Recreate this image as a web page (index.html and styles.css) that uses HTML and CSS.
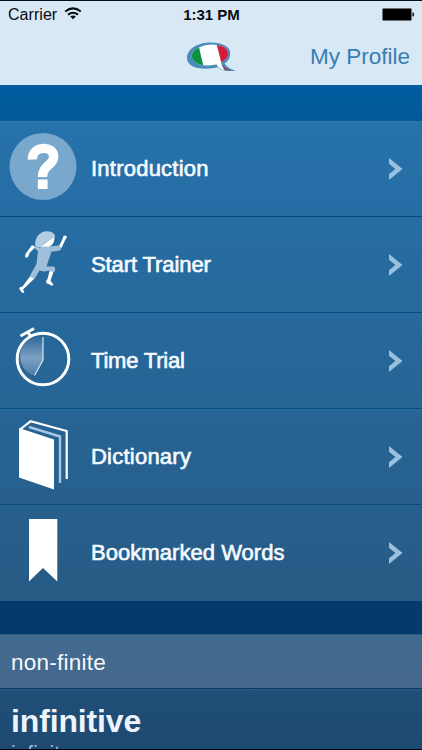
FILE: index.html
```html
<!DOCTYPE html>
<html lang="en">
<head>
<meta charset="utf-8">
<title>My Profile</title>
<link rel="stylesheet" href="styles.css">
</head>
<body>
<div class="screen">
  <header class="header">
    <div class="status">
      <div class="carrier">Carrier
        <svg class="wifi" width="18" height="13" viewBox="0 0 18 13"><g fill="none" stroke="#080b0e" stroke-width="2"><path d="M1.2 4.5Q9-1.7 16.8 4.5"/><path d="M4 7.6Q9 3.8 14 7.6"/></g><path fill="#080b0e" d="M6.2 9.5Q9 7.4 11.8 9.5L9 12.3Z"/></svg>
      </div>
      <div class="time">1:31 PM</div>
      <svg class="battery" width="33" height="14" viewBox="0 0 33 14"><rect x=".5" y=".5" width="29" height="12" rx="1" fill="#000" stroke="#697178" stroke-width=".7"/><path d="M30.5 4.5h1q1 2 0 4h-1z"/></svg>
    </div>
    <nav class="nav">
      <svg class="logo" width="50" height="32" viewBox="0 0 50 32">
        <defs><clipPath id="bubble"><ellipse cx="24" cy="14" rx="18.3" ry="10.4" transform="rotate(-6 24 14)"/></clipPath></defs>
        <path fill="#498cb9" d="M1 17C1 7.500 12 1.500 25 1.500C36.500 1.500 44.200 5.500 44.200 12.500C44.200 17 42 20.500 38.500 22.500Q42 28 49.500 29.600Q38 31.500 31.500 26.300C15 30 1 26.500 1 17Z"/>
        <g clip-path="url(#bubble)"><path fill="#fff" d="M0 0h50v32H0z"/><path fill="#0b9143" d="M0 0H11.500L19 32H0z"/><path fill="#d21c38" d="M29.800 0H50V32H38Z"/></g>
        <path fill="#fff" d="M28.500 21h6.500q.5 4.500 3.500 8q-5.500-1-8-5.500z"/><path fill="#a9345a" d="M36.500 23.500Q39 28 44.500 29.500L39 29.300Q36.500 26.500 36.500 23.500z"/>
      </svg>
      <a class="profile">My Profile</a>
    </nav>
  </header>
  <main class="menu">
    <div class="row">
      <svg class="icon" width="86" height="94" viewBox="0 0 86 94"><circle cx="43" cy="44.500" r="33.500" fill="#79a8cc"/><path fill="none" stroke="#fff" stroke-width="9.400" d="M32.400 37.500C32 23.500 53.700 23 53.700 34.500C53.700 43.500 42.500 43 42.500 55"/><path fill="#fff" d="M37.800 57.500h9.800v9.500h-9.800z"/></svg>
      <span class="label">Introduction</span><svg class="arrow" width="16" height="24" viewBox="0 0 16 24"><path d="M1 1L14.5 12L1 23V17.3L7.4 12L1 6.7Z"/></svg>
    </div>
    <div class="row">
      <svg class="icon" width="86" height="94" viewBox="0 0 86 94">
        <path fill="#fff" d="M40 29L54.5 18Q55 26 49 29Z"/>
        <path fill="#fff" d="M35.5 29L32 27L25.5 36L25 39Q27 41 28.5 38L29.5 35Z"/>
        <path fill="#fff" d="M58.8 28.5L62.5 21L63.5 18Q66 16.5 67 19L65.2 22L61.5 30Z"/>
        <path fill="#fff" d="M30 58.5L34.5 60.5L23 71.5L24.3 74Q23 76 21.5 74L19.3 71Q19.3 68.5 22.5 68.5Z"/>
        <path fill="#fff" d="M50 51L54.5 51L50.5 62.5L53.3 66.5Q53 68.5 50.5 67L46.3 65Q45.5 63 47.5 61Z"/>
        <path fill="#9fbfdb" d="M35 27.5Q38 31 43 28.5L49 28.5L59 27.5L61.5 31.5Q57 34 51.5 33.5L46.5 48.5H54Q56 50 54.5 54L50 53.5V52.5L44 53.5L39.5 52.5L34.5 61L29.5 58.5L36.5 46L38 33L34.5 30Z"/>
        <path fill="#b5cde4" d="M35 27C35 18 41 13.5 46 13.2Q53 13 55 17.5Q54.5 20 50 22Q45 24 42.5 28Q38 31 35 27Z"/>
      </svg>
      <span class="label tight">Start Trainer</span><svg class="arrow" width="16" height="24" viewBox="0 0 16 24"><path d="M1 1L14.5 12L1 23V17.3L7.4 12L1 6.7Z"/></svg>
    </div>
    <div class="row">
      <svg class="icon" width="86" height="94" viewBox="0 0 86 94"><defs><linearGradient id="dial" x2="0" y2="1"><stop stop-color="#2c6799"/><stop offset=".55" stop-color="#7da2c3"/><stop offset="1" stop-color="#4a7da9"/></linearGradient></defs><path fill="url(#dial)" d="M43 22C14 23 14 56 34.500 61.500L43 46Z"/><circle cx="43" cy="45" r="25.8" fill="none" stroke="#fff" stroke-width="3"/><path d="M43 23V46L34.5 61.5" fill="none" stroke="#d5e4f0" stroke-width="1.2"/><path d="M20.5 22L34 14.5M27.5 18L31 22.5" fill="none" stroke="#fff" stroke-width="3"/></svg>
      <span class="label tighter">Time Trial</span><svg class="arrow" width="16" height="24" viewBox="0 0 16 24"><path d="M1 1L14.5 12L1 23V17.3L7.4 12L1 6.7Z"/></svg>
    </div>
    <div class="row">
      <svg class="icon" width="86" height="94" viewBox="0 0 86 94"><path fill="#fff" d="M19 18L54 29.5V79.5L19 67.5Z"/><path fill="none" stroke="#fff" stroke-width="2.2" d="M20 19.5L30.5 11.3L66.7 21V69"/><path fill="none" stroke="#a7c6e2" stroke-width="2.4" d="M29 17L60 26.5V73"/></svg>
      <span class="label">Dictionary</span><svg class="arrow" width="16" height="24" viewBox="0 0 16 24"><path d="M1 1L14.5 12L1 23V17.3L7.4 12L1 6.7Z"/></svg>
    </div>
    <div class="row">
      <svg class="icon" width="86" height="94" viewBox="0 0 86 94"><path fill="#fff" d="M29 13H57.3V75.5L43 62L29 75.5Z"/></svg>
      <span class="label snug">Bookmarked Words</span><svg class="arrow" width="16" height="24" viewBox="0 0 16 24"><path d="M1 1L14.5 12L1 23V17.3L7.4 12L1 6.7Z"/></svg>
    </div>
  </main>
  <section class="word">
    <h2 class="category">non-finite</h2>
    <div class="entry"><h1 class="term">infinitive</h1><p class="translation">infinito</p></div>
  </section>
</div>
</body>
</html>
```
FILE: styles.css
```css
* { box-sizing: border-box; }
body { margin: 0; font-family: "Liberation Sans", Arial, sans-serif; }
h1, h2, p { margin: 0; }
svg { display: block; flex: none; }
.screen {
  display: flex;
  flex-direction: column;
  height: 750px;
  overflow: hidden;
  background: linear-gradient(#005c9f 85px, #005999 120px, #033b6c 600px, #033b6c);
  border-top: 1px solid #080b18;
  border-bottom: 1px solid #02050c;
}
.header { flex: none; height: 84px; background: #d9e8f5; }
.status {
  display: grid;
  grid-template-columns: 1fr auto 1fr;
  align-items: center;
  height: 27px;
  padding: 0 7px 0 8px;
  color: #080b0e;
}
.carrier { display: flex; align-items: center; gap: 7px; font-size: 16px; letter-spacing: .05px; }
.wifi { margin-top: -3px; }
.time { font-size: 15px; font-weight: 700; }
.battery { justify-self: end; }
.nav {
  display: flex;
  align-items: center;
  justify-content: space-between;
  height: 57px;
  padding: 0 12px 0 186px;
}
.profile { font-size: 22.5px; white-space: nowrap; color: #397db3; }
.menu {
  flex: none;
  height: 480px;
  margin-top: 36px;
  background: linear-gradient(#2672ab, #275b85);
}
.row {
  display: flex;
  align-items: center;
  height: 96px;
  padding-right: 18px;
  border-top: 1px solid #347aad;
  border-bottom: 1px solid #094a7c;
}
.row + .row { border-top-color: #286ea4; }
.row:last-child { border-top-color: #2a6290; border-bottom-color: transparent; }
.icon { margin-right: 5px; }
.label {
  flex: 1;
  font-size: 22px;
  letter-spacing: .23px;
  color: #f4faff;
  -webkit-text-stroke: .65px #f4faff;
}
.snug { letter-spacing: .05px; }
.tight { letter-spacing: -.1px; }
.tighter { letter-spacing: -.2px; }
.arrow { fill: #9bc0de; }
.word { flex: none; margin-top: 33px; }
.category {
  height: 55px;
  padding-left: 11px;
  border-top: 1px solid #2d5e88;
  border-bottom: 1px solid #0b3762;
  background: linear-gradient(#426b8f, #45678c);
  font-size: 22.5px;
  font-weight: 400;
  line-height: 55px;
  letter-spacing: .25px;
  color: #f4f8fc;
}
.entry {
  height: 100px;
  padding: 11px 11px 0;
  border-top: 1px solid #2a5b84;
  background: linear-gradient(#204f78, #1c456d);
}
.term { font-size: 32px; line-height: 40px; letter-spacing: -.15px; color: #edf4fd; }
.translation { font-size: 21px; line-height: 24px; color: #a6bdd2; }
```
